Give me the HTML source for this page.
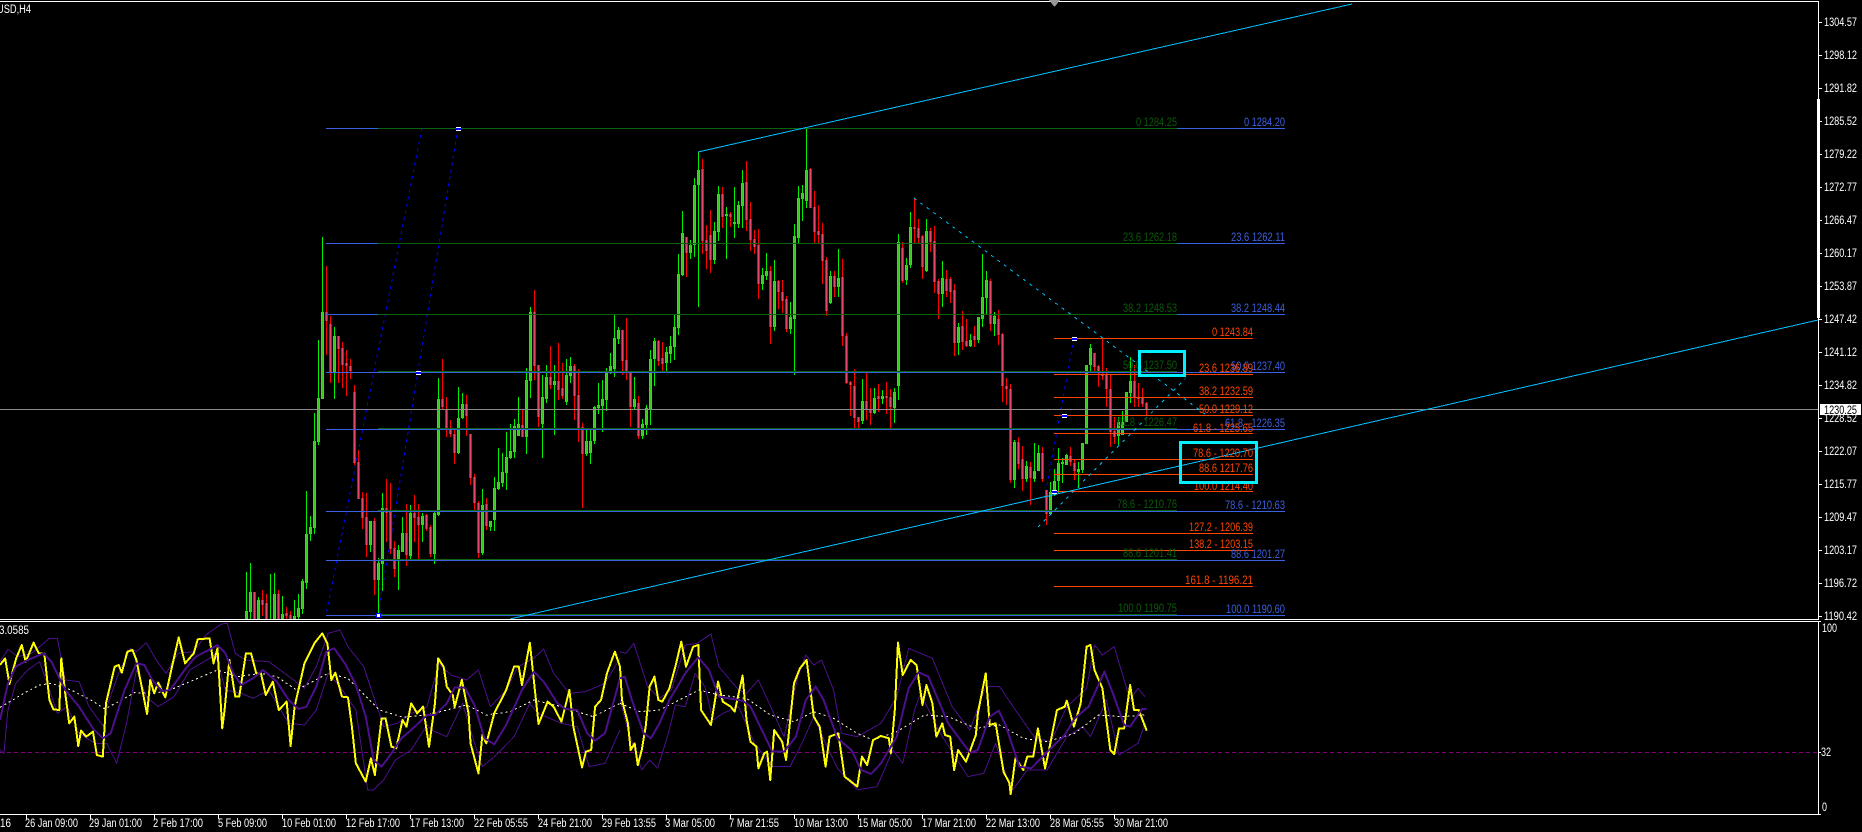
<!DOCTYPE html>
<html><head><meta charset="utf-8"><style>
html,body{margin:0;padding:0;background:#000;width:1862px;height:832px;overflow:hidden}
svg{display:block}
text{font-family:"Liberation Sans",sans-serif;font-size:11.5px;fill:#fff}
.g text{fill:#0a5a0a}.b text{fill:#3c5fe0}.o text{fill:#ff4500}
polyline{fill:none;vector-effect:non-scaling-stroke;stroke-linejoin:round}
</style></head><body>
<svg width="1862" height="832" viewBox="0 0 1862 832" shape-rendering="crispEdges" fill="none">
<defs><clipPath id="m"><rect x="0" y="2" width="1818" height="617"/></clipPath>
<path id="gb" d="M246.5 611V619M250.5 592V612M258.5 600V619M274.5 594V619M282.5 614V619M294.5 616V619M298.5 608V617M302.5 581V609M306.5 534V583M310.5 527V534M314.5 441V528M318.5 398V442M322.5 312V399M334.5 336V372M370.5 521V545M378.5 563V580M382.5 508V564M398.5 550V560M402.5 533V552M410.5 513V556M422.5 516V525M434.5 513V554M438.5 399V515M458.5 418V453M462.5 404V418M482.5 505V553M490.5 521V527M494.5 488V520M498.5 482V489M502.5 472V483M506.5 457V473M510.5 451V458M514.5 426V452M518.5 424V436M526.5 380V437M530.5 312V381M542.5 397V424M546.5 377V399M554.5 381V385M566.5 375V402M570.5 366V376M586.5 441V454M590.5 441V453M594.5 407V441M598.5 405V408M602.5 399V406M606.5 373V400M610.5 366V373M614.5 338V369M618.5 330V339M634.5 399V407M642.5 424V436M646.5 408V425M650.5 359V409M654.5 341V359M666.5 352V363M670.5 346V354M674.5 327V347M678.5 274V328M682.5 233V275M690.5 245V253M694.5 185V245M698.5 170V185M714.5 231V260M718.5 194V232M726.5 214V216M734.5 222V224M738.5 205V224M742.5 183V206M762.5 275V284M766.5 271V276M774.5 281V327M790.5 317V329M794.5 236V319M798.5 198V238M802.5 193V199M806.5 170V201M830.5 276V303M838.5 278V287M862.5 401V421M874.5 398V413M882.5 396V399M894.5 392V408M898.5 242V386M906.5 265V280M910.5 227V265M926.5 231V271M942.5 278V294M958.5 327V343M970.5 340V346M978.5 317V340M982.5 297V319M986.5 280V298M994.5 316V324M1014.5 442V480M1026.5 466V479M1034.5 471V479M1038.5 453V471M1050.5 492V514M1054.5 481V493M1058.5 463V481M1062.5 462V464M1066.5 455V465M1078.5 469V472M1082.5 443V470M1086.5 365V444M1090.5 348V365M1118.5 422V436M1122.5 422V435M1126.5 392V422M1130.5 381V393"/>
<path id="rb" d="M254.5 592V619M262.5 600V605M266.5 603V619M278.5 594V619M286.5 613V616M290.5 615V619M326.5 312V321M330.5 324V372M338.5 336V349M342.5 348V365M346.5 363V366M350.5 366V371M354.5 392V463M358.5 462V499M362.5 498V518M366.5 517V545M374.5 521V580M386.5 508V513M390.5 512V549M394.5 548V569M406.5 533V555M414.5 513V518M418.5 517V525M426.5 515V529M430.5 527V554M442.5 399V407M446.5 409V429M450.5 429V434M454.5 434V453M466.5 404V416M470.5 434V478M474.5 477V503M478.5 503V553M486.5 504V526M522.5 425V437M534.5 312V366M538.5 365V417M550.5 377V385M558.5 381V390M562.5 388V396M574.5 366V396M578.5 395V428M582.5 427V454M622.5 330V361M626.5 360V372M630.5 372V407M638.5 403V436M658.5 341V361M662.5 358V364M686.5 237V253M702.5 169V241M706.5 240V251M710.5 235V260M722.5 194V217M730.5 214V217M746.5 182V220M750.5 219V240M754.5 239V247M758.5 245V284M770.5 271V327M778.5 281V292M782.5 292V301M786.5 299V329M810.5 169V208M814.5 207V232M818.5 231V235M822.5 234V261M826.5 260V311M834.5 276V287M842.5 277V336M846.5 336V383M850.5 382V385M854.5 386V418M858.5 417V422M866.5 401V410M870.5 409V413M878.5 396V399M886.5 396V398M890.5 397V407M902.5 248V281M914.5 227V229M918.5 228V238M922.5 236V267M930.5 231V242M934.5 241V282M938.5 281V294M946.5 279V291M950.5 279V292M954.5 290V343M962.5 326V342M966.5 341V346M974.5 336V340M990.5 281V324M998.5 319V335M1002.5 334V386M1006.5 386V389M1010.5 389V480M1018.5 442V464M1022.5 459V479M1030.5 467V478M1042.5 453V479M1046.5 490V514M1070.5 456V462M1074.5 463V471M1094.5 353V367M1098.5 366V373M1102.5 374V376M1106.5 375V389M1110.5 389V432M1114.5 431V437M1134.5 381V397M1138.5 397V399M1142.5 398V404M1146.5 403V409"/>
</defs>

<!-- dashed blue fan lines -->
<g stroke="#0000ff" stroke-dasharray="3 4">
<path d="M422 128L326 615"/><path d="M458 128L378 615"/><path d="M1074 338L1046 491"/>
</g>

<g clip-path="url(#m)">
<!-- wicks -->
<path stroke="#00ee00" d="M246.5 572V619M250.5 563V619M258.5 597V619M270.5 574V619M274.5 573V619M282.5 596V619M294.5 600V619M298.5 594V619M302.5 579V614M306.5 491V589M310.5 516V541M314.5 413V534M318.5 340V445M322.5 237V399M334.5 327V399M370.5 521V552M378.5 558V615M382.5 493V591M398.5 545V590M402.5 517V552M410.5 505V560M422.5 513V542M434.5 512V564M438.5 378V516M458.5 387V454M462.5 393V419M482.5 489V555M490.5 521V531M494.5 477V531M498.5 448V490M502.5 453V487M506.5 432V490M510.5 424V459M514.5 419V458M518.5 397V436M526.5 368V454M530.5 307V398M542.5 375V458M546.5 365V403M554.5 365V435M566.5 359V405M570.5 357V383M586.5 430V456M590.5 430V464M594.5 406V444M598.5 383V414M602.5 380V432M606.5 368V411M610.5 353V374M614.5 315V377M618.5 327V344M634.5 377V410M642.5 419V439M646.5 405V435M650.5 350V425M654.5 338V386M666.5 347V372M670.5 336V363M674.5 315V360M678.5 254V335M682.5 211V276M690.5 240V259M694.5 178V257M698.5 152V307M714.5 222V264M718.5 186V241M726.5 207V259M734.5 187V238M738.5 201V228M742.5 170V228M762.5 268V290M766.5 253V280M774.5 260V331M790.5 302V334M794.5 224V375M798.5 186V243M802.5 185V221M806.5 128V208M830.5 271V304M838.5 249V297M862.5 379V424M874.5 388V414M882.5 390V404M894.5 388V423M898.5 234V400M906.5 258V285M910.5 212V268M926.5 219V272M942.5 261V307M958.5 323V355M970.5 334V347M978.5 317V343M982.5 254V327M986.5 271V315M994.5 312V336M1014.5 440V488M1026.5 461V482M1034.5 443V482M1038.5 445V471M1050.5 482V514M1054.5 469V496M1058.5 448V493M1062.5 458V483M1066.5 454V465M1078.5 462V488M1082.5 443V473M1086.5 365V444M1090.5 344V371M1118.5 417V445M1122.5 411V435M1126.5 392V422M1130.5 357V403"/>
<path stroke="#ff0000" d="M254.5 592V619M262.5 590V616M266.5 594V619M278.5 590V619M286.5 607V619M290.5 611V619M326.5 266V355M330.5 316V383M338.5 336V383M342.5 342V388M346.5 350V396M350.5 359V379M354.5 385V465M358.5 450V499M362.5 492V529M366.5 493V557M374.5 518V595M386.5 479V542M390.5 483V554M394.5 541V577M406.5 504V566M414.5 495V542M418.5 504V559M426.5 514V531M430.5 525V557M442.5 359V410M446.5 397V437M450.5 420V437M454.5 429V464M466.5 395V436M470.5 434V485M474.5 474V510M478.5 501V558M486.5 498V530M522.5 410V437M534.5 290V380M538.5 365V427M550.5 346V389M558.5 343V400M562.5 363V399M574.5 364V420M578.5 369V442M582.5 423V508M622.5 330V375M626.5 318V380M630.5 372V427M638.5 396V439M658.5 340V366M662.5 342V372M686.5 237V277M702.5 159V254M706.5 225V269M710.5 210V273M722.5 187V228M730.5 212V227M746.5 161V231M750.5 202V251M754.5 230V254M758.5 229V299M770.5 266V344M778.5 280V309M782.5 280V313M786.5 296V332M810.5 168V208M814.5 191V243M818.5 205V243M822.5 223V284M826.5 257V316M834.5 271V297M842.5 259V346M846.5 333V384M850.5 381V416M854.5 369V428M858.5 417V430M866.5 372V420M870.5 388V425M878.5 384V412M886.5 382V414M890.5 389V428M902.5 242V283M914.5 199V243M918.5 219V243M922.5 235V279M930.5 228V252M934.5 226V293M938.5 279V319M946.5 270V297M950.5 277V303M954.5 284V356M962.5 311V350M966.5 319V347M974.5 326V347M990.5 279V331M998.5 310V345M1002.5 333V402M1006.5 378V405M1010.5 384V483M1018.5 437V469M1022.5 446V491M1030.5 462V505M1042.5 447V482M1046.5 490V525M1070.5 447V466M1074.5 460V480M1094.5 353V371M1098.5 365V387M1102.5 338V380M1106.5 368V407M1110.5 375V447M1114.5 417V444M1134.5 365V407M1138.5 383V407M1142.5 388V407M1146.5 402V415"/>
<!-- bodies -->
<use href="#gb" stroke="#00ff00" stroke-width="3"/>
<use href="#gb" stroke="#36c81e" stroke-width="1"/>
<use href="#rb" stroke="#ff0000" stroke-width="3"/>
<use href="#rb" stroke="#e4466a" stroke-width="1"/>
</g>

<!-- current price line -->
<path stroke="#8c8c8c" d="M0 409.5H1818"/>

<!-- blue fib -->
<path stroke="#3a62e0" d="M326 128.5H1285M326 243.5H1285M326 314.5H1285M326 372.5H1285M326 429.5H1285M326 511.5H1285M326 560.5H1285M326 615.5H1285"/>
<!-- green fib -->
<path stroke="#0b640b" d="M378 128.5H1177M378 243.5H1177M378 314.5H1177M378 371.5H1177M378 428.5H1177M378 510.5H1177M378 559.5H1177M378 614.5H1177"/>
<!-- orange fib -->
<path stroke="#ff4500" d="M1054 338.5H1253M1054 374.5H1253M1054 397.5H1253M1054 415.5H1253M1054 433.5H1253M1054 459.5H1253M1054 474.5H1253M1054 491.5H1253M1054 533.5H1253M1054 550.5H1253M1054 586.5H1253"/>

<!-- trend lines -->
<path stroke="#00bfff" d="M698 152L1352 4"/>
<path stroke="#00bfff" d="M510 619L1818 320"/>
<path stroke="#00bfff" d="M914 198L1205 414" stroke-dasharray="3 5"/>
<path stroke="#00bfff" d="M1038 527L1185 379" stroke-dasharray="3 5"/>

<!-- handles -->
<g fill="#0000ff" stroke="none">
<rect x="456" y="127" width="5" height="4"/><rect x="416" y="371" width="5" height="4"/><rect x="376" y="613" width="5" height="5"/>
<rect x="1072" y="337" width="5" height="4"/><rect x="1062" y="414" width="5" height="4"/><rect x="1052" y="490" width="5" height="4"/>
</g>
<g fill="#fff" stroke="none">
<rect x="456" y="127" width="5" height="1"/><rect x="456" y="130" width="5" height="1"/><rect x="416" y="371" width="5" height="1"/><rect x="416" y="374" width="5" height="1"/><rect x="377" y="614" width="3" height="3"/>
<rect x="1072" y="337" width="5" height="1"/><rect x="1072" y="340" width="5" height="1"/><rect x="1062" y="414" width="5" height="1"/><rect x="1062" y="417" width="5" height="1"/><rect x="1052" y="490" width="5" height="1"/><rect x="1052" y="493" width="5" height="1"/>
</g>

<!-- fib labels -->
<g class="g">
<text x="1136" y="126" textLength="41" lengthAdjust="spacingAndGlyphs">0 1284.25</text>
<text x="1123" y="241" textLength="54" lengthAdjust="spacingAndGlyphs">23.6 1262.18</text>
<text x="1123" y="312" textLength="54" lengthAdjust="spacingAndGlyphs">38.2 1248.53</text>
<text x="1123" y="369" textLength="54" lengthAdjust="spacingAndGlyphs">50.0 1237.50</text>
<text x="1117" y="426" textLength="60" lengthAdjust="spacingAndGlyphs">61.8 - 1226.47</text>
<text x="1117" y="508" textLength="60" lengthAdjust="spacingAndGlyphs">78.6 - 1210.76</text>
<text x="1123" y="557" textLength="54" lengthAdjust="spacingAndGlyphs">88.6 1201.41</text>
<text x="1118" y="612" textLength="59" lengthAdjust="spacingAndGlyphs">100.0 1190.75</text>
</g>
<g class="b">
<text x="1244" y="126" textLength="41" lengthAdjust="spacingAndGlyphs">0 1284.20</text>
<text x="1231" y="241" textLength="54" lengthAdjust="spacingAndGlyphs">23.6 1262.11</text>
<text x="1231" y="312" textLength="54" lengthAdjust="spacingAndGlyphs">38.2 1248.44</text>
<text x="1231" y="370" textLength="54" lengthAdjust="spacingAndGlyphs">50.0 1237.40</text>
<text x="1225" y="427" textLength="60" lengthAdjust="spacingAndGlyphs">61.8 - 1226.35</text>
<text x="1225" y="509" textLength="60" lengthAdjust="spacingAndGlyphs">78.6 - 1210.63</text>
<text x="1231" y="558" textLength="54" lengthAdjust="spacingAndGlyphs">88.6 1201.27</text>
<text x="1226" y="613" textLength="59" lengthAdjust="spacingAndGlyphs">100.0 1190.60</text>
</g>
<g class="o">
<text x="1212" y="336" textLength="41" lengthAdjust="spacingAndGlyphs">0 1243.84</text>
<text x="1199" y="372" textLength="54" lengthAdjust="spacingAndGlyphs">23.6 1236.89</text>
<text x="1199" y="395" textLength="54" lengthAdjust="spacingAndGlyphs">38.2 1232.59</text>
<text x="1199" y="413" textLength="54" lengthAdjust="spacingAndGlyphs">50.0 1229.12</text>
<text x="1193" y="432" textLength="60" lengthAdjust="spacingAndGlyphs">61.8 - 1225.65</text>
<text x="1193" y="457" textLength="60" lengthAdjust="spacingAndGlyphs">78.6 - 1220.70</text>
<text x="1199" y="472" textLength="54" lengthAdjust="spacingAndGlyphs">88.6 1217.76</text>
<text x="1194" y="490" textLength="59" lengthAdjust="spacingAndGlyphs">100.0 1214.40</text>
<text x="1189" y="531" textLength="64" lengthAdjust="spacingAndGlyphs">127.2 - 1206.39</text>
<text x="1189" y="548" textLength="64" lengthAdjust="spacingAndGlyphs">138.2 - 1203.15</text>
<text x="1185" y="584" textLength="68" lengthAdjust="spacingAndGlyphs">161.8 -  1196.21</text>
</g>

<!-- highlight rectangles -->
<rect x="1139.5" y="351.5" width="45" height="24" stroke="#00f0ff" stroke-width="3"/>
<rect x="1180.5" y="442.5" width="76" height="40" stroke="#00f0ff" stroke-width="3"/>

<!-- frames -->
<g stroke="#fff">
<path d="M0 1.5H1818.5V619.5H0"/>
<path d="M0 621.5H1818.5V814.5H0"/>
<path stroke-width="3" d="M1818.5 99V318"/>
<path d="M1819 22.5h3M1819 55.5h3M1819 88.5h3M1819 121.5h3M1819 154.5h3M1819 187.5h3M1819 220.5h3M1819 253.5h3M1819 286.5h3M1819 319.5h3M1819 352.5h3M1819 385.5h3M1819 418.5h3M1819 451.5h3M1819 484.5h3M1819 517.5h3M1819 550.5h3M1819 583.5h3M1819 616.5h3M1819 621.5h2M1819 752.5h2M1819 814.5h2"/>
<path d="M26.5 815v4M90.5 815v4M154.5 815v4M218.5 815v4M282.5 815v4M346.5 815v4M410.5 815v4M474.5 815v4M538.5 815v4M602.5 815v4M666.5 815v4M730.5 815v4M794.5 815v4M858.5 815v4M922.5 815v4M986.5 815v4M1050.5 815v4M1114.5 815v4"/>
</g>
<path d="M1049 0H1060L1054.5 7Z" fill="#999" stroke="none"/>

<!-- top-left labels -->
<text x="-3" y="13" textLength="34" lengthAdjust="spacingAndGlyphs">USD,H4</text>
<text x="-1" y="634" textLength="30" lengthAdjust="spacingAndGlyphs">3.0585</text>

<!-- price scale -->
<g>
<text x="1824" y="26" textLength="33" lengthAdjust="spacingAndGlyphs">1304.57</text>
<text x="1824" y="59" textLength="33" lengthAdjust="spacingAndGlyphs">1298.12</text>
<text x="1824" y="92" textLength="33" lengthAdjust="spacingAndGlyphs">1291.82</text>
<text x="1824" y="125" textLength="33" lengthAdjust="spacingAndGlyphs">1285.52</text>
<text x="1824" y="158" textLength="33" lengthAdjust="spacingAndGlyphs">1279.22</text>
<text x="1824" y="191" textLength="33" lengthAdjust="spacingAndGlyphs">1272.77</text>
<text x="1824" y="224" textLength="33" lengthAdjust="spacingAndGlyphs">1266.47</text>
<text x="1824" y="257" textLength="33" lengthAdjust="spacingAndGlyphs">1260.17</text>
<text x="1824" y="290" textLength="33" lengthAdjust="spacingAndGlyphs">1253.87</text>
<text x="1824" y="323" textLength="33" lengthAdjust="spacingAndGlyphs">1247.42</text>
<text x="1824" y="356" textLength="33" lengthAdjust="spacingAndGlyphs">1241.12</text>
<text x="1824" y="389" textLength="33" lengthAdjust="spacingAndGlyphs">1234.82</text>
<text x="1824" y="422" textLength="33" lengthAdjust="spacingAndGlyphs">1228.52</text>
<text x="1824" y="455" textLength="33" lengthAdjust="spacingAndGlyphs">1222.07</text>
<text x="1824" y="488" textLength="33" lengthAdjust="spacingAndGlyphs">1215.77</text>
<text x="1824" y="521" textLength="33" lengthAdjust="spacingAndGlyphs">1209.47</text>
<text x="1824" y="554" textLength="33" lengthAdjust="spacingAndGlyphs">1203.17</text>
<text x="1824" y="587" textLength="33" lengthAdjust="spacingAndGlyphs">1196.72</text>
<text x="1824" y="620" textLength="33" lengthAdjust="spacingAndGlyphs">1190.42</text>
<rect x="1820" y="404" width="41" height="11" fill="#fff" stroke="none"/>
<text x="1824" y="414" textLength="33" lengthAdjust="spacingAndGlyphs" style="fill:#000">1230.25</text>
<text x="1822" y="632" textLength="15" lengthAdjust="spacingAndGlyphs">100</text>
<text x="1821" y="756" textLength="10" lengthAdjust="spacingAndGlyphs">32</text>
<text x="1822" y="811" textLength="5" lengthAdjust="spacingAndGlyphs">0</text>
</g>

<!-- sub window level -->
<path stroke="#800080" stroke-dasharray="4 3" d="M0 752.5H1818"/>

<!-- indicator part 1 (coords 0..1568 -> 0..620px) -->
<g transform="translate(0 610) scale(.39541 .33333)">
<polyline stroke="#4b0f8c" stroke-width="1" points="0,155 20,118 45,140 80,130 125,85 145,85 165,210 200,215 225,290 262,350 270,290 300,190 330,115 345,125 370,98 395,150 420,190 450,130 490,125 520,75 560,42 575,40 595,130 620,150 680,155 720,190 770,235 800,170 830,70 860,60 880,110 920,170 945,260 970,350 1005,340 1040,310 1080,290 1110,160 1140,195 1180,210 1210,180 1240,290 1280,240 1310,170 1350,145 1375,117 1400,190 1440,250 1480,245 1530,220 1568,145"/>
<polyline stroke="#4b0f8c" stroke-width="1" points="0,420 10,430 20,300 40,220 70,180 100,155 125,240 145,310 170,290 200,370 240,400 270,400 295,460 320,340 345,180 370,260 400,290 440,260 480,180 530,145 545,130 570,240 610,250 640,265 680,240 730,340 770,345 800,300 830,190 860,230 900,300 930,540 945,540 970,510 1000,450 1040,420 1080,345 1090,360 1130,380 1170,280 1200,400 1220,470 1250,440 1300,380 1340,280 1360,310 1420,340 1460,350 1490,470 1530,460 1568,360"/>
<polyline stroke="#fff8dc" stroke-width="1" stroke-dasharray="2 3" points="0,292 25,275 60,250 100,225 130,220 180,240 230,270 265,297 300,275 340,248 390,250 430,240 480,215 550,180 600,200 660,190 700,200 750,240 790,215 830,190 880,205 930,265 960,300 1020,322 1080,315 1130,300 1180,285 1230,315 1290,305 1350,270 1420,290 1500,320 1568,280"/>
<polyline stroke="#ffff00" stroke-width="2" points="0,165 13,145 24,222 33,180 41,145 55,105 65,155 85,98 98,130 112,130 125,270 135,298 150,300 155,145 165,250 175,340 188,320 198,408 205,362 218,380 235,365 245,435 260,440 268,280 290,170 300,165 308,188 322,125 335,120 345,150 355,210 372,312 380,210 390,250 400,218 418,262 435,170 452,82 468,160 490,130 500,88 530,85 540,160 550,115 562,355 568,300 580,150 595,260 605,260 622,130 635,130 648,190 660,190 672,255 690,215 705,300 725,275 735,408 745,290 770,160 795,100 815,70 828,100 838,210 848,188 865,260 880,262 890,350 900,460 925,515 938,445 948,495 965,325 975,325 990,410 1002,415 1018,330 1028,350 1040,280 1055,310 1070,290 1085,410 1100,280 1108,145 1122,170 1130,230 1145,255 1150,290 1168,210 1185,310 1190,400 1210,490 1220,375 1230,400 1250,310 1280,240 1300,170 1312,170 1320,225 1340,98 1350,210 1362,342 1385,275 1400,290 1420,335 1440,240 1450,350 1472,472 1482,425 1495,420 1505,290 1520,270 1535,190 1555,125 1568,170"/>
<polyline stroke="#4b0f8c" stroke-width="2" points="0,330 20,220 40,170 70,150 110,130 130,155 165,240 200,290 235,355 260,385 280,370 315,240 345,160 365,165 385,210 410,243 430,240 470,175 495,140 520,125 550,105 570,130 590,190 610,225 640,205 665,180 700,215 730,270 755,297 775,290 800,230 825,125 845,115 875,165 900,225 925,320 945,450 965,470 990,430 1015,385 1040,360 1080,315 1100,315 1130,280 1150,232 1175,232 1200,285 1225,385 1250,403 1280,345 1320,240 1350,185 1375,215 1410,280 1430,297 1460,300 1485,370 1505,392 1530,370 1568,205"/>
</g>
<!-- indicator part 2 -->
<g transform="translate(620 610) scale(.39541 .33333)">
<polyline stroke="#4b0f8c" stroke-width="1" points="0,125 15,130 35,100 70,230 100,265 130,240 165,105 195,100 230,72 250,170 300,240 320,250 350,210 385,300 415,380 450,200 470,135 490,165 510,150 540,240 560,370 600,380 660,340 700,260 730,115 790,145 840,290 885,360 925,230 960,230 1000,300 1050,385 1090,395 1130,290 1180,235 1200,105 1220,135 1250,110 1290,270 1310,235 1328,260"/>
<polyline stroke="#4b0f8c" stroke-width="1" points="0,270 20,360 55,480 75,450 95,475 120,380 140,285 165,290 190,190 215,230 235,330 260,310 300,290 340,400 385,470 430,470 460,400 490,320 520,400 550,475 600,540 650,530 690,420 715,460 745,300 760,250 810,370 880,500 920,490 950,400 990,545 1030,480 1080,480 1130,380 1170,350 1190,380 1230,270 1262,435 1310,400 1328,340"/>
<polyline stroke="#fff8dc" stroke-width="1" stroke-dasharray="2 3" points="0,280 50,305 100,300 150,270 200,240 250,255 320,265 380,315 440,335 490,305 540,325 600,370 640,390 700,365 770,315 830,320 900,355 960,345 1020,385 1080,395 1150,370 1210,315 1270,320 1330,315"/>
<polyline stroke="#ffff00" stroke-width="2" points="0,170 5,270 20,340 27,420 37,400 45,465 55,420 65,350 75,230 87,200 97,270 107,275 125,235 140,170 155,95 167,170 185,110 198,105 205,300 230,345 248,215 260,275 280,290 290,305 310,197 320,330 330,395 345,410 350,475 365,430 372,425 380,510 390,360 410,395 420,450 440,220 455,175 472,150 490,320 505,350 520,470 530,380 552,370 568,500 590,520 600,530 612,440 625,465 640,390 660,378 680,385 685,430 695,300 703,98 715,195 735,150 750,165 765,285 775,225 790,280 800,380 815,340 822,375 835,380 845,480 855,420 875,455 900,375 905,310 925,190 935,345 950,340 970,485 985,520 988,552 1000,445 1020,480 1030,440 1045,440 1057,355 1075,475 1085,420 1105,300 1125,290 1130,272 1148,350 1165,280 1180,110 1190,105 1200,180 1220,235 1240,420 1250,432 1262,355 1275,355 1290,225 1300,300 1312,300 1332,362"/>
<polyline stroke="#4b0f8c" stroke-width="2" points="0,205 12,200 30,270 60,370 78,385 100,340 125,270 165,190 198,142 225,180 250,260 310,272 330,290 365,375 385,425 415,425 445,380 470,270 495,230 515,270 550,385 585,420 610,480 635,492 660,460 700,380 730,235 755,187 780,200 830,340 885,428 905,420 935,320 958,302 975,345 1010,470 1040,475 1085,420 1125,375 1150,325 1185,290 1225,185 1245,245 1275,345 1290,350 1320,297 1332,297"/>
</g>

<!-- time axis -->
<g>
<text x="0" y="827" textLength="11" lengthAdjust="spacingAndGlyphs">16</text>
<text x="25" y="827" textLength="53" lengthAdjust="spacingAndGlyphs">26 Jan 09:00</text>
<text x="89" y="827" textLength="53" lengthAdjust="spacingAndGlyphs">29 Jan 01:00</text>
<text x="153" y="827" textLength="50" lengthAdjust="spacingAndGlyphs">2 Feb 17:00</text>
<text x="218" y="827" textLength="49" lengthAdjust="spacingAndGlyphs">5 Feb 09:00</text>
<text x="282" y="827" textLength="54" lengthAdjust="spacingAndGlyphs">10 Feb 01:00</text>
<text x="346" y="827" textLength="54" lengthAdjust="spacingAndGlyphs">12 Feb 17:00</text>
<text x="410" y="827" textLength="54" lengthAdjust="spacingAndGlyphs">17 Feb 13:00</text>
<text x="474" y="827" textLength="54" lengthAdjust="spacingAndGlyphs">22 Feb 05:55</text>
<text x="538" y="827" textLength="54" lengthAdjust="spacingAndGlyphs">24 Feb 21:00</text>
<text x="602" y="827" textLength="54" lengthAdjust="spacingAndGlyphs">29 Feb 13:55</text>
<text x="665" y="827" textLength="50" lengthAdjust="spacingAndGlyphs">3 Mar 05:00</text>
<text x="729" y="827" textLength="50" lengthAdjust="spacingAndGlyphs">7 Mar 21:55</text>
<text x="794" y="827" textLength="54" lengthAdjust="spacingAndGlyphs">10 Mar 13:00</text>
<text x="858" y="827" textLength="54" lengthAdjust="spacingAndGlyphs">15 Mar 05:00</text>
<text x="922" y="827" textLength="54" lengthAdjust="spacingAndGlyphs">17 Mar 21:00</text>
<text x="986" y="827" textLength="54" lengthAdjust="spacingAndGlyphs">22 Mar 13:00</text>
<text x="1050" y="827" textLength="54" lengthAdjust="spacingAndGlyphs">28 Mar 05:55</text>
<text x="1114" y="827" textLength="54" lengthAdjust="spacingAndGlyphs">30 Mar 21:00</text>
</g>
</svg>
</body></html>
